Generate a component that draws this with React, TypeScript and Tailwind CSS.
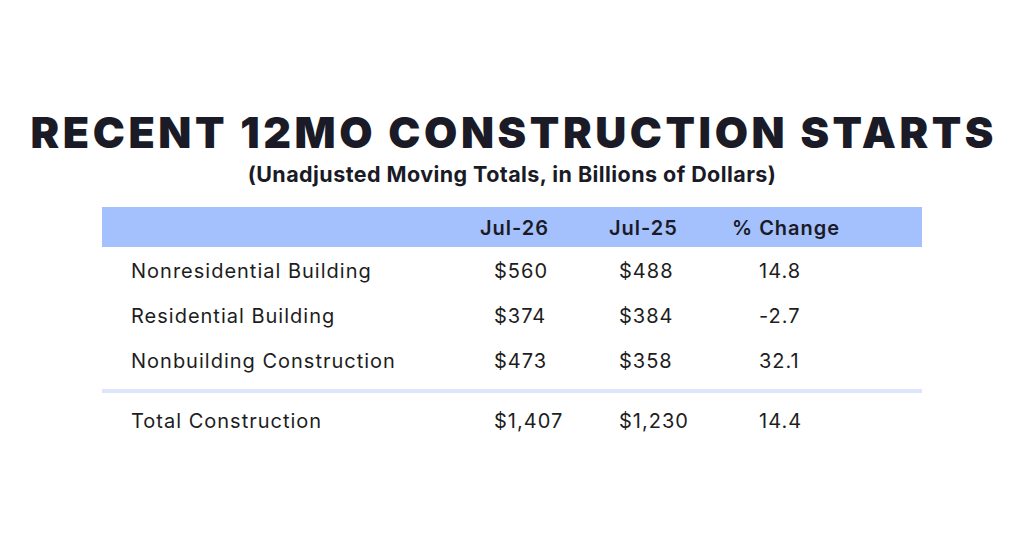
import React from "react";

const rows = [
  { label: "Nonresidential Building", a: "$560", b: "$488", c: "14.8" },
  { label: "Residential Building", a: "$374", b: "$384", c: "-2.7" },
  { label: "Nonbuilding Construction", a: "$473", b: "$358", c: "32.1" },
];

function Row({ label, a, b, c }: { label: string; a: string; b: string; c: string }) {
  return (
    <div className="grid h-[45px] grid-cols-[378px_129px_123px_190px] items-center text-[20px] leading-[24px] tracking-[0.05em] text-[#1d1d22]">
      <div className="pl-[29px]">{label}</div>
      <div className="pl-[14px]">{a}</div>
      <div className="pl-[10px]">{b}</div>
      <div className="pl-[27px]">{c}</div>
    </div>
  );
}

export default function App() {
  return (
    <div
      className="flex h-[533px] w-[1024px] flex-col items-center bg-white pt-[110px]"
      style={{ fontFamily: "Inter, 'Noto Sans', sans-serif" }}
    >
      <h1 className="pl-[0.083em] text-[43px] font-black leading-[44px] tracking-[0.083em] text-[#1a1b26]">
        RECENT 12MO CONSTRUCTION STARTS
      </h1>
      <p className="mt-[8px] text-[21.5px] font-bold leading-[24px] tracking-[0.02em] text-[#1a1b26]">
        (Unadjusted Moving Totals, in Billions of Dollars)
      </p>
      <div className="mt-[21px] w-[820px]">
        <div className="grid h-[40px] grid-cols-[378px_129px_123px_190px] items-center bg-[#a5c1fd] pt-[2px] text-[20px] font-semibold leading-[24px] tracking-[0.05em] text-[#1a1b26]">
          <div></div>
          <div>Jul-26</div>
          <div>Jul-25</div>
          <div>% Change</div>
        </div>
        <div className="mt-[1px]">
          {rows.map((r) => (
            <Row key={r.label} {...r} />
          ))}
        </div>
        <div className="mt-[6px] h-[4px] bg-[#dce6fd]"></div>
        <div className="mt-[5px]">
          <Row label="Total Construction" a="$1,407" b="$1,230" c="14.4" />
        </div>
      </div>
    </div>
  );
}
